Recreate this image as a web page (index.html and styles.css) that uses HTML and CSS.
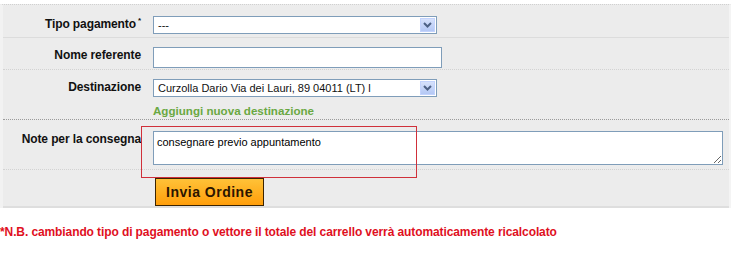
FILE: index.html
```html
<!DOCTYPE html>
<html lang="it">
<head>
    <meta charset="UTF-8">
    <title>Conferma ordine</title>
    <link rel="stylesheet" href="styles.css">
</head>
<body>
<div class="order-form">
    <div class="form-row row-pay">
        <div class="form-label">Tipo pagamento<sup>*</sup></div>
        <div class="form-field">
            <div class="select-box select-wide">
                <span class="select-text">---</span>
                <span class="select-arrow">
                    <svg width="9" height="6" viewBox="0 0 9 6"><path d="M1 1 L4.5 4.5 L8 1" fill="none" stroke="#4d6185" stroke-width="2"/></svg>
                </span>
            </div>
        </div>
    </div>

    <div class="form-row row-name">
        <div class="form-label">Nome referente</div>
        <div class="form-field">
            <input type="text" class="text-input">
        </div>
    </div>

    <div class="form-row row-dest">
        <div class="form-label">Destinazione</div>
        <div class="form-field">
            <div class="select-box select-wide">
                <span class="select-text">Curzolla Dario Via dei Lauri, 89 04011 (LT) l</span>
                <span class="select-arrow">
                    <svg width="9" height="6" viewBox="0 0 9 6"><path d="M1 1 L4.5 4.5 L8 1" fill="none" stroke="#4d6185" stroke-width="2"/></svg>
                </span>
            </div>
            <a href="#" class="add-link">Aggiungi nuova destinazione</a>
        </div>
    </div>

    <div class="form-row row-notes">
        <div class="form-label">Note per la consegna</div>
        <div class="form-field">
            <textarea class="notes">consegnare previo appuntamento</textarea>
        </div>
        <div class="highlight"></div>
    </div>

    <div class="form-row row-submit">
        <div class="form-label"></div>
        <div class="form-field">
            <button class="submit-btn">Invia Ordine</button>
        </div>
    </div>
</div>

<p class="note">*N.B. cambiando tipo di pagamento o vettore il totale del carrello verrà automaticamente ricalcolato</p>
</body>
</html>
```

FILE: styles.css
```css
body {
    margin: 0;
    font-family: "Liberation Sans", Arial, sans-serif;
    font-size: 12px;
    color: #111;
    background-color: #fff;
}

.order-form {
    width: 726px;
    margin-top: 4px;
    background-color: #ececec;
    border-left: 3px solid #f2f2f2;
    border-right: 2px solid #f4f4f4;
    border-top: 1px dotted #d0d0d0;
}

.form-row {
    display: flex;
    position: relative;
    border-bottom: 1px dotted #d2d2d2;
}

.row-pay {
    height: 33px;
    padding-top: 11px;
    box-sizing: border-box;
    border-bottom: 1px solid #dcdcdc;
}

.row-name {
    height: 32px;
    padding-top: 9px;
    box-sizing: border-box;
}

.row-dest {
    height: 50px;
    padding-top: 9px;
    box-sizing: border-box;
    border-bottom: 1px dotted #9a9a9a;
}

.row-notes {
    height: 50px;
    padding-top: 11px;
    box-sizing: border-box;
}

.row-submit {
    height: 38px;
    padding-top: 8px;
    box-sizing: border-box;
    border-bottom: 2px solid #dedede;
}

.form-label {
    width: 138px;
    flex-shrink: 0;
    text-align: right;
    font-weight: bold;
    font-size: 12px;
    letter-spacing: -0.1px;
    padding-top: 1px;
    white-space: nowrap;
}

.form-label sup {
    font-size: 8px;
    line-height: 0;
    margin-left: 2px;
}

.form-field {
    padding-left: 12px;
    display: flex;
    flex-direction: column;
    align-items: flex-start;
}

.select-box {
    display: flex;
    align-items: center;
    height: 18px;
    box-sizing: border-box;
    border: 1px solid #7f9db9;
    background-color: #fff;
    font-size: 11px;
}

.select-wide {
    width: 284px;
}

.select-text {
    flex: 1;
    padding-left: 4px;
    white-space: nowrap;
    overflow: hidden;
}

.select-arrow {
    width: 15px;
    height: 14px;
    margin-right: 1px;
    display: flex;
    align-items: center;
    justify-content: center;
    background: linear-gradient(#d6e1fb, #b4c8f5);
    border: 1px solid #c3d3fd;
    box-sizing: border-box;
}

.text-input {
    width: 289px;
    height: 21px;
    box-sizing: border-box;
    margin: 0;
    border: 1px solid #7f9db9;
    background-color: #fff;
}

.add-link {
    margin-top: 7px;
    font-weight: bold;
    font-size: 11.6px;
    color: #6aa843;
    text-decoration: none;
}

.notes {
    width: 570px;
    height: 34px;
    box-sizing: border-box;
    margin: 0;
    padding: 4px 3px 2px;
    border: 1px solid #7f9db9;
    font-family: "Liberation Sans", Arial, sans-serif;
    font-size: 11px;
    color: #000;
    resize: both;
}

.highlight {
    position: absolute;
    left: 138px;
    top: 6px;
    width: 276px;
    height: 52px;
    box-sizing: border-box;
    border: 1px solid #d0303a;
    pointer-events: none;
}

.submit-btn {
    margin-left: 2px;
    width: 109px;
    height: 28px;
    border: 1px solid #3c2400;
    background: linear-gradient(#ffc238, #ff9e0a);
    color: #2a1500;
    font-family: "Liberation Sans", Arial, sans-serif;
    font-weight: bold;
    font-size: 14px;
    letter-spacing: 0.5px;
    padding: 0;
    cursor: pointer;
}

.note {
    margin: 17px 0 0 0;
    font-weight: bold;
    font-size: 12px;
    letter-spacing: -0.1px;
    color: #e0101e;
    white-space: nowrap;
}
```
